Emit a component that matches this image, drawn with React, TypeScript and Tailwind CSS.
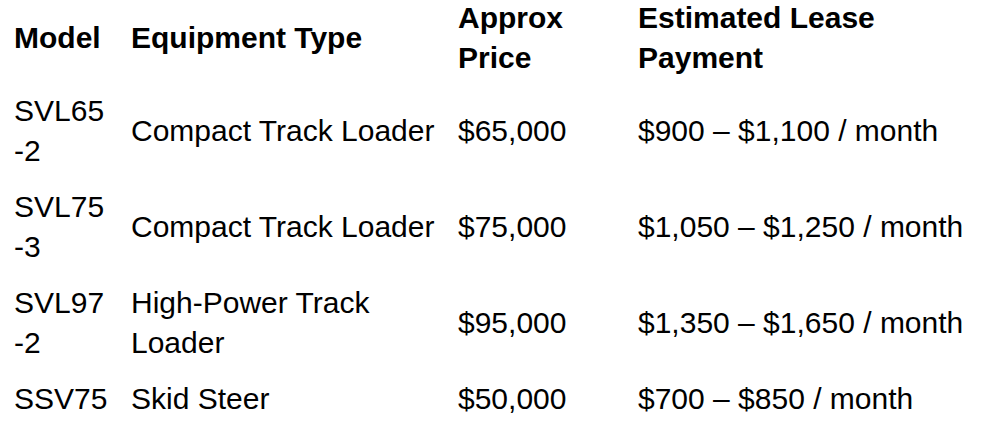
import React from "react";

const rows: { model: string[]; type: string[]; price: string; lease: string }[] = [
  { model: ["SVL65", "-2"], type: ["Compact Track Loader"], price: "$65,000", lease: "$900 – $1,100 / month" },
  { model: ["SVL75", "-3"], type: ["Compact Track Loader"], price: "$75,000", lease: "$1,050 – $1,250 / month" },
  { model: ["SVL97", "-2"], type: ["High-Power Track", "Loader"], price: "$95,000", lease: "$1,350 – $1,650 / month" },
  { model: ["SSV75"], type: ["Skid Steer"], price: "$50,000", lease: "$700 – $850 / month" },
];

function Lines({ lines }: { lines: string[] }) {
  return (
    <>
      {lines.map((l, i) => (
        <span key={i} className="block whitespace-nowrap">
          {l}
        </span>
      ))}
    </>
  );
}

export default function App() {
  return (
    <div
      className="w-[984px] h-[434px] bg-white text-black overflow-hidden"
      style={{ fontFamily: '"Liberation Sans", Arial, Helvetica, sans-serif' }}
    >
      <table className="table-fixed border-collapse w-[984px] text-[30px] leading-[40px] -mt-[13px]">
        <colgroup>
          <col className="w-[117px]" />
          <col className="w-[327px]" />
          <col className="w-[180px]" />
          <col />
        </colgroup>
        <thead>
          <tr className="font-bold text-left align-middle">
            <th className="pl-[14px] pt-[11px] pb-[5px]">Model</th>
            <th className="pl-[14px] pt-[11px] pb-[5px]">Equipment Type</th>
            <th className="pl-[14px] pt-[11px] pb-[5px]">
              <Lines lines={["Approx", "Price"]} />
            </th>
            <th className="pl-[14px] pt-[11px] pb-[5px]">
              <Lines lines={["Estimated Lease", "Payment"]} />
            </th>
          </tr>
        </thead>
        <tbody>
          {rows.map((r, i) => (
            <tr key={i} className="align-middle">
              <td className="pl-[14px] py-[8px]">
                <Lines lines={r.model} />
              </td>
              <td className="pl-[14px] py-[8px]">
                <Lines lines={r.type} />
              </td>
              <td className="pl-[14px] py-[8px] whitespace-nowrap">{r.price}</td>
              <td className="pl-[14px] py-[8px] whitespace-nowrap">{r.lease}</td>
            </tr>
          ))}
        </tbody>
      </table>
    </div>
  );
}
